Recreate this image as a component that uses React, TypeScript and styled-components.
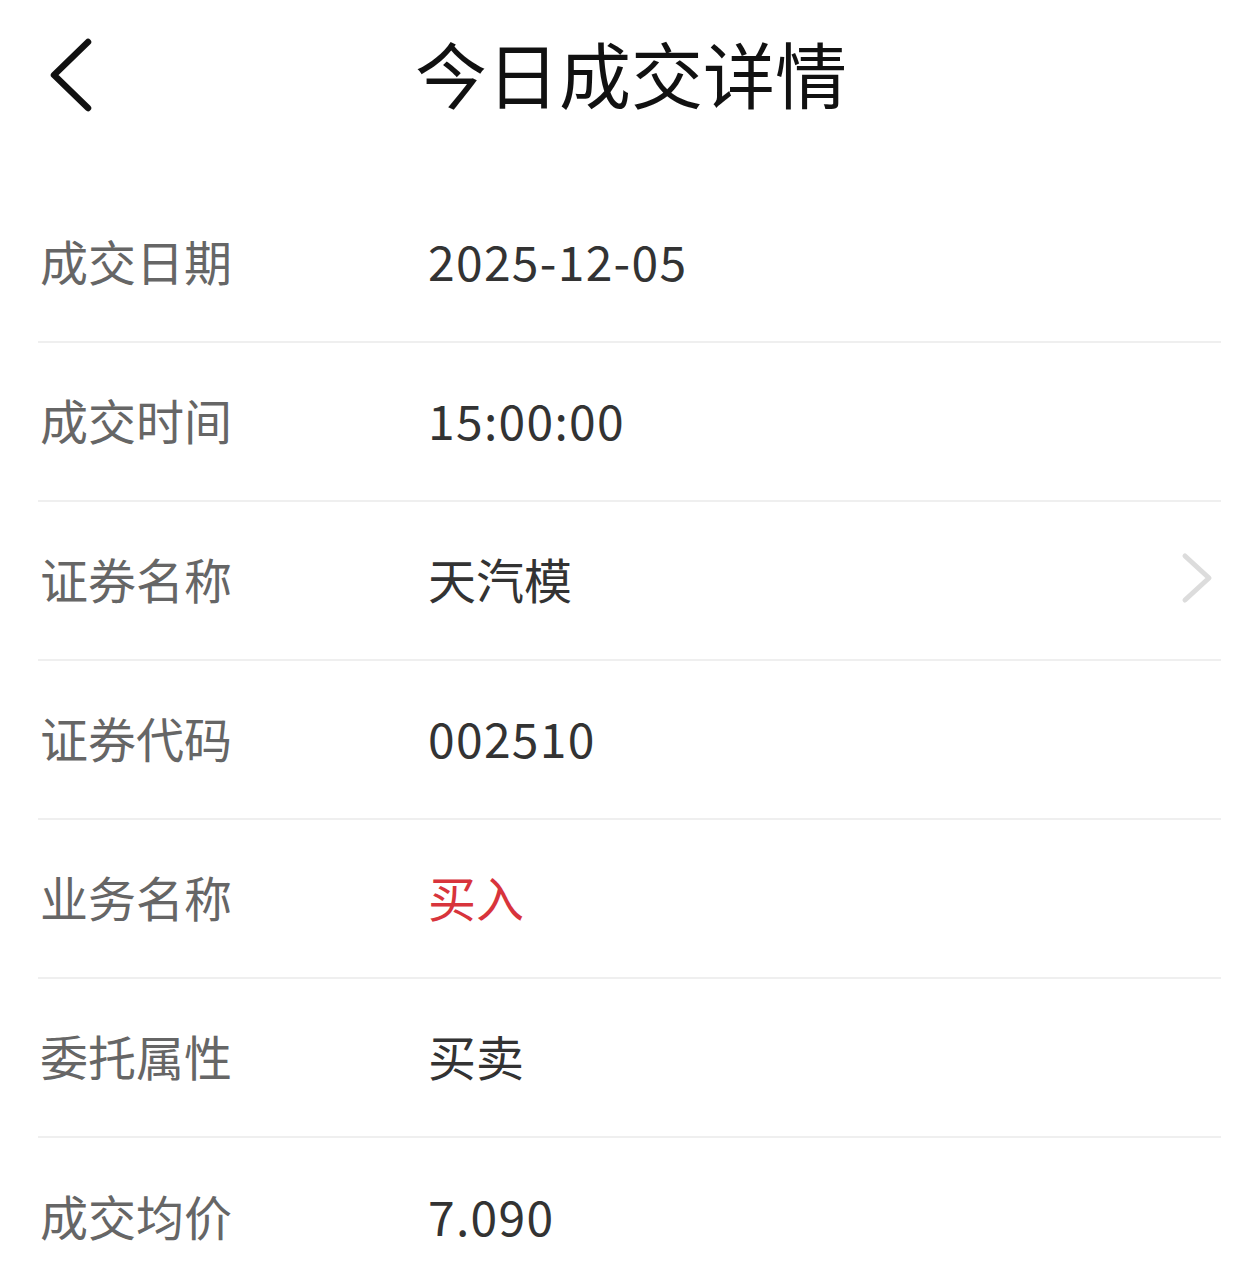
import React from 'react';
import styled, { createGlobalStyle } from 'styled-components';

const GlobalStyle = createGlobalStyle`
  html, body {
    margin: 0;
    padding: 0;
    background: #ffffff;
    font-family: "Noto Sans CJK SC", "Noto Sans", sans-serif;
  }
`;

const Page = styled.div`
  width: 1260px;
  min-height: 1278px;
  background: #ffffff;
`;

const Header = styled.div`
  position: relative;
  height: 152px;
  display: flex;
  align-items: center;
  justify-content: center;
`;

const BackButton = styled.div`
  position: absolute;
  left: 46px;
  top: 36px;
  width: 52px;
  height: 80px;
  display: flex;
  align-items: center;
  justify-content: center;
`;

const Title = styled.h1`
  margin: 0 0 8px;
  font-size: 72px;
  font-weight: 400;
  color: #111111;
  line-height: 1;
  padding-left: 2px;
`;

const List = styled.div`
  padding-top: 32px;
  margin: 0 39px 0 38px;
`;

const Row = styled.div<{ $last?: boolean }>`
  box-sizing: border-box;
  height: 159px;
  padding-bottom: 5px;
  display: flex;
  align-items: center;
  border-bottom: ${(p) => (p.$last ? 'none' : '2px solid #efefef')};
`;

const Label = styled.div`
  width: 388px;
  padding-left: 2px;
  font-size: 48px;
  color: #666666;
  line-height: 1;
`;

const Value = styled.div<{ $color?: string; $numeric?: boolean }>`
  flex: 1;
  font-size: 48px;
  color: ${(p) => p.$color || '#333333'};
  letter-spacing: ${(p) => (p.$numeric ? '1.3px' : '0')};
  line-height: 1;
`;

const Arrow = styled.div`
  width: 40px;
  display: flex;
  justify-content: flex-end;
  padding-right: 8px;
`;

const rows: { label: string; value: string; color?: string; link?: boolean }[] = [
  { label: '成交日期', value: '2025-12-05' },
  { label: '成交时间', value: '15:00:00' },
  { label: '证券名称', value: '天汽模', link: true },
  { label: '证券代码', value: '002510' },
  { label: '业务名称', value: '买入', color: '#d8343c' },
  { label: '委托属性', value: '买卖' },
  { label: '成交均价', value: '7.090' },
];

const App: React.FC = () => {
  return (
    <Page>
      <GlobalStyle />
      <Header>
        <BackButton>
          <svg width="52" height="80" viewBox="0 0 52 80">
            <polyline
              points="42,6 8,39 42,72"
              fill="none"
              stroke="#111"
              strokeWidth="6.5"
              strokeLinecap="round"
              strokeLinejoin="round"
            />
          </svg>
        </BackButton>
        <Title>今日成交详情</Title>
      </Header>
      <List>
        {rows.map((r, i) => (
          <Row key={r.label} $last={i === rows.length - 1}>
            <Label>{r.label}</Label>
            <Value $color={r.color} $numeric={/^[0-9.:-]+$/.test(r.value)}>
              {r.value}
            </Value>
            {r.link && (
              <Arrow>
                <svg width="32" height="52" viewBox="0 0 32 52">
                  <polyline
                    points="4,4 28,26 4,48"
                    fill="none"
                    stroke="#dcdcdc"
                    strokeWidth="5"
                    strokeLinecap="round"
                    strokeLinejoin="round"
                  />
                </svg>
              </Arrow>
            )}
          </Row>
        ))}
      </List>
    </Page>
  );
};

export default App;
